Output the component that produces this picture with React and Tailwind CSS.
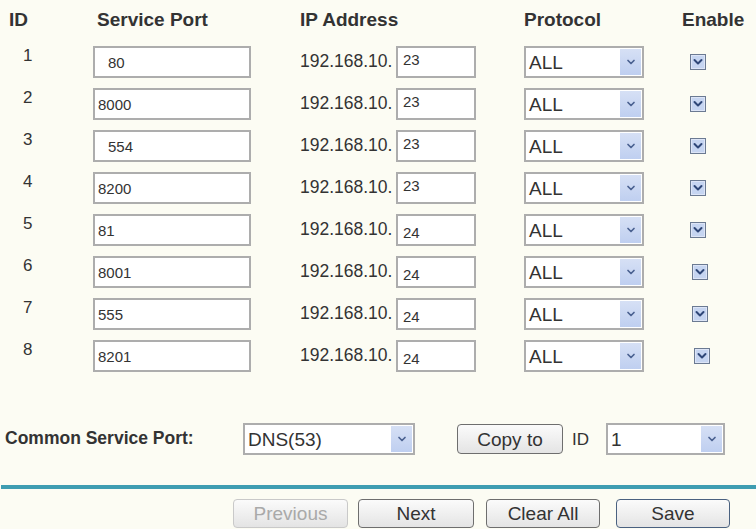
import React from "react";

const rows = [
  { id: 1, port: "80", pl: "pl-[13px]", ip: "23", cb: "ml-[46px]" },
  { id: 2, port: "8000", pl: "pl-[3px]", ip: "23", cb: "ml-[46px]" },
  { id: 3, port: "554", pl: "pl-[13px]", ip: "23", cb: "ml-[46px]" },
  { id: 4, port: "8200", pl: "pl-[3px]", ip: "23", cb: "ml-[46px]" },
  { id: 5, port: "81", pl: "pl-[3px]", ip: "24", cb: "ml-[46px]" },
  { id: 6, port: "8001", pl: "pl-[3px]", ip: "24", cb: "ml-[48px]" },
  { id: 7, port: "555", pl: "pl-[3px]", ip: "24", cb: "ml-[48px]" },
  { id: 8, port: "8201", pl: "pl-[3px]", ip: "24", cb: "ml-[50px]" },
];

function Chevron({ className }) {
  return (
    <svg viewBox="0 0 10 8" className={className}>
      <polyline
        points="2,2.5 5,5.5 8,2.5"
        fill="none"
        stroke="#4a6190"
        strokeWidth="1.7"
        strokeLinecap="round"
        strokeLinejoin="round"
      />
    </svg>
  );
}

function Select({ value, width }) {
  return (
    <div
      className={`${width} h-[32px] flex items-stretch border-2 border-[#adadad] bg-white`}
    >
      <div className="flex-1 flex items-center pl-[3px] text-[19px] text-[#333] leading-none">
        {value}
      </div>
      <div className="w-[21px] m-[1px] flex items-center justify-center bg-gradient-to-b from-[#d6e0f5] to-[#bfcff0]">
        <Chevron className="w-[10px] h-[8px]" />
      </div>
    </div>
  );
}

function Checkbox() {
  return (
    <svg viewBox="0 0 16 16" className="w-[16px] h-[16px]">
      <rect x="0.5" y="0.5" width="15" height="15" fill="#c6d5f1" stroke="#6b7a92" />
      <rect x="1.5" y="1.5" width="13" height="13" fill="none" stroke="#dde5f7" />
      <polyline
        points="4.5,6 8,9.5 11.5,6"
        fill="none"
        stroke="#2f4778"
        strokeWidth="2"
        strokeLinecap="round"
        strokeLinejoin="round"
      />
    </svg>
  );
}

function Button({ children, width, variant }) {
  const border =
    variant === "disabled"
      ? "border-[#c9c9c9] text-[#a9a9a9]"
      : variant === "primary"
      ? "border-2 border-[#4a6180] text-[#333]"
      : "border-[#6e6e6e] text-[#333]";
  return (
    <div
      className={`${width} h-[29px] flex items-center justify-center rounded-[4px] border-[1.5px] ${border} bg-gradient-to-b from-[#fbfbfb] to-[#e4e4e4] text-[19px] leading-none`}
    >
      {children}
    </div>
  );
}

export default function App() {
  return (
    <div
      className="w-[756px] h-[529px] overflow-hidden bg-[#fcfcf3] text-[#333]"
      style={{ fontFamily: '"Liberation Sans", Arial, sans-serif' }}
    >
      <div className="pt-[10px]">
        {/* header */}
        <div className="flex font-bold text-[19px] leading-[19px] text-[#333]">
          <div className="w-[97px] pl-[9px]">ID</div>
          <div className="w-[203px]">Service Port</div>
          <div className="w-[224px]">IP Address</div>
          <div className="w-[158px]">Protocol</div>
          <div>Enable</div>
        </div>

        {/* rows */}
        <div className="mt-[17px] flex flex-col gap-[10px]">
          {rows.map((r) => (
            <div key={r.id} className="flex items-center h-[32px]">
              <div className="w-[93px] self-start pl-[23px] text-[17px] leading-[20px]">
                {r.id}
              </div>
              <div
                className={`w-[158px] h-[32px] flex items-center ${r.pl} border-2 border-[#adadad] bg-white text-[15px] leading-none`}
              >
                {r.port}
              </div>
              <div className="w-[49px]" />
              <div className="w-[96px] text-[17.5px] leading-none">192.168.10.</div>
              <div
                className={`w-[80px] h-[32px] flex items-center pl-[5px] border-2 border-[#adadad] bg-white text-[15px] leading-none ${
                  r.ip === "23" ? "pb-[5px]" : "pt-[4px]"
                }`}
              >
                {r.ip}
              </div>
              <div className="w-[48px]" />
              <Select value="ALL" width="w-[120px]" />
              <div className={r.cb}>
                <Checkbox />
              </div>
            </div>
          ))}
        </div>

        {/* common service port */}
        <div className="mt-[51px] flex items-center h-[32px]">
          <div className="w-[243px] pl-[5px] font-bold text-[17.5px] leading-none">
            Common Service Port:
          </div>
          <Select value="DNS(53)" width="w-[172px]" />
          <div className="ml-[42px]">
            <div className="w-[106px] h-[30px] flex items-center justify-center rounded-[4px] border-[1.5px] border-[#6e6e6e] bg-gradient-to-b from-[#fbfbfb] to-[#e4e4e4] text-[19px] leading-none">
              Copy to
            </div>
          </div>
          <div className="ml-[9px] w-[34px] text-[17px] leading-none">ID</div>
          <Select value="1" width="w-[119px]" />
        </div>

        {/* divider */}
        <div className="mt-[30px] h-[4px] bg-[#3f9db1] ml-[1px]" />

        {/* buttons */}
        <div className="mt-[10px] flex pl-[233px] gap-[10px]">
          <Button width="w-[115px]" variant="disabled">Previous</Button>
          <Button width="w-[116px]">Next</Button>
          <div className="ml-[2px]">
            <Button width="w-[114px]">Clear All</Button>
          </div>
          <div className="ml-[6px]">
            <Button width="w-[114px]" variant="primary">Save</Button>
          </div>
        </div>
      </div>
    </div>
  );
}
